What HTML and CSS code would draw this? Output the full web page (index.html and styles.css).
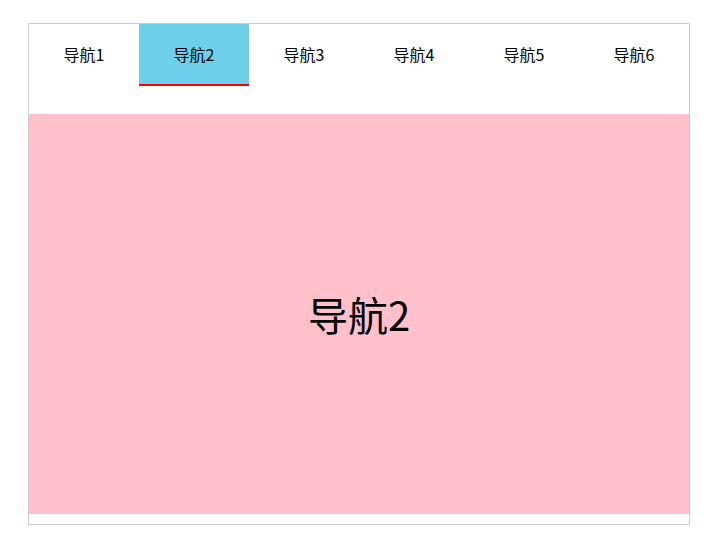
FILE: index.html
```html
<!DOCTYPE html>
<html lang="zh">
<head>
<meta charset="utf-8">
<link rel="stylesheet" href="styles.css">
</head>
<body>
<div class="box">
  <ul class="tabs">
    <li class="tab">导航1</li>
    <li class="tab active">导航2</li>
    <li class="tab">导航3</li>
    <li class="tab">导航4</li>
    <li class="tab">导航5</li>
    <li class="tab">导航6</li>
  </ul>
  <div class="panel">导航2</div>
</div>
</body>
</html>
```
FILE: styles.css
```css
html, body { margin: 0; padding: 0; background: #fff; }
body { font-family: "Microsoft YaHei", "Noto Sans CJK SC", sans-serif; color: #000; }
.box {
  margin: 23px 0 0 28px;
  width: 660px;
  height: 500px;
  border: 1px solid #ccc;
}
.tabs {
  list-style: none;
  margin: 0;
  padding: 0;
  display: flex;
  height: 90px;
  align-items: flex-start;
}
.tab {
  width: 110px;
  height: 60px;
  line-height: 60px;
  text-align: center;
  font-size: 16px;
  border-bottom: 2px solid transparent;
}
.tab.active {
  background: #6dcfe9;
  border-bottom-color: #f00;
}
.panel {
  height: 400px;
  background: pink;
  display: flex;
  align-items: center;
  justify-content: center;
  font-size: 40px;
}
```
